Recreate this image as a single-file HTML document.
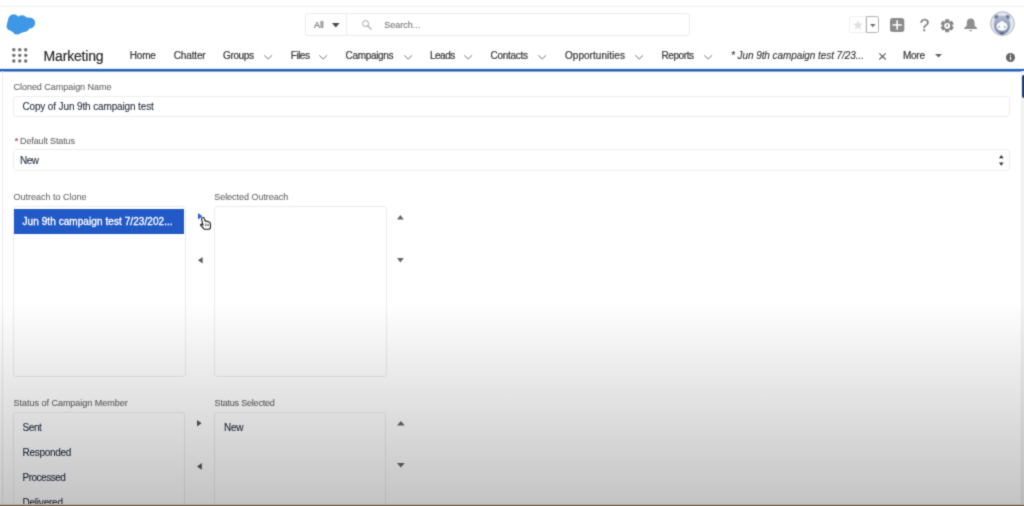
<!DOCTYPE html>
<html><head><meta charset="utf-8"><title>Marketing</title>
<style>
html,body{margin:0;padding:0}
body{width:1024px;height:506px;position:relative;overflow:hidden;background:#fff;font-family:"Liberation Sans",sans-serif}
.t{position:absolute;white-space:nowrap;display:block;-webkit-text-stroke:0.1px currentColor}
.a{position:absolute;display:block}
.box{position:absolute;box-sizing:border-box;border:1px solid #e4e4e6;border-radius:3px}
svg{position:absolute;overflow:visible}
#c{position:absolute;left:20px;top:20px;width:1044px;height:526px}
#w{position:absolute;left:-20px;top:-20px;width:1064px;height:546px;padding:0;overflow:hidden;background:#fff;filter:url(#soft)}
</style></head><body><svg width="0" height="0" style="position:absolute"><defs><filter id="soft" x="0" y="0" width="100%" height="100%" color-interpolation-filters="sRGB"><feConvolveMatrix order="3" kernelMatrix="0.03 0.1 0.03 0.1 0.48 0.1 0.03 0.1 0.03" edgeMode="duplicate" preserveAlpha="true"/></filter></defs></svg><div id="w"><div id="c">
<div class="a" style="left:-20px;top:5.5px;width:1064px;height:1px;background:#eeeef0"></div>
<div class="a" style="left:-20px;top:68px;width:1064px;height:1px;background:#e6eef9"></div>
<div class="a" style="left:-20px;top:69px;width:1064px;height:2px;background:#2560bb"></div>
<div class="a" style="left:-20px;top:71px;width:1064px;height:1px;background:#7ea3dc"></div>
<div class="a" style="left:2px;top:71px;width:1px;height:455px;background:#ebebeb"></div>
<div class="a" style="left:1021px;top:71px;width:1px;height:455px;background:#e9e9ec"></div>
<div class="a" style="left:1022px;top:71px;width:22px;height:455px;background:#f3f4f7"></div>
<div class="a" style="left:1022px;top:75px;width:22px;height:22.5px;background:#1d3d72;border-radius:2px 0 0 2px"></div>

<!-- cloud logo -->
<svg style="left:0;top:0" width="48" height="40" viewBox="0 0 48 40">
<g fill="#3e97e7"><circle cx="13.8" cy="20" r="5.7"/><circle cx="22" cy="20.300" r="5.100"/><circle cx="29.600" cy="23" r="5.500"/><circle cx="11" cy="26.200" r="4.400"/><circle cx="17.100" cy="29.900" r="4.600"/><circle cx="24.500" cy="27" r="4.900"/><circle cx="18" cy="24.500" r="5"/><circle cx="12.200" cy="23.300" r="5"/><circle cx="26" cy="22.300" r="5"/><circle cx="21" cy="28.300" r="4.600"/><circle cx="14" cy="28" r="4.300"/></g>
</svg>

<!-- waffle -->
<svg style="left:12.3px;top:48.4px" width="16" height="15" viewBox="0 0 16 15">
<g fill="#6f6f6f">
<circle cx="1.8" cy="1.7" r="1.7"/><circle cx="7.75" cy="1.7" r="1.7"/><circle cx="13.7" cy="1.7" r="1.7"/>
<circle cx="1.8" cy="7.35" r="1.7"/><circle cx="7.75" cy="7.35" r="1.7"/><circle cx="13.7" cy="7.35" r="1.7"/>
<circle cx="1.8" cy="13" r="1.7"/><circle cx="7.75" cy="13" r="1.7"/><circle cx="13.7" cy="13" r="1.7"/>
</g></svg>

<!-- search -->
<div class="box" style="left:305px;top:13px;width:385px;height:23px;border-color:#ececf0;background:#fff"></div>
<div class="a" style="left:346px;top:14px;width:1px;height:21px;background:#eeeef1"></div>
<svg style="left:331.6px;top:23px" width="8" height="5" viewBox="0 0 8 5"><path d="M0 0H7.6L3.8 4.6Z" fill="#4a4a4a"/></svg>
<svg style="left:361.5px;top:20.2px" width="10" height="10" viewBox="0 0 10 10"><circle cx="3.6" cy="3.6" r="3" fill="none" stroke="#a5a5a5" stroke-width="1"/><path d="M5.8 5.8L9 9" stroke="#a5a5a5" stroke-width="1.2" stroke-linecap="round"/></svg>

<!-- nav chevrons -->
<svg style="left:263.6px;top:54.7px" width="9" height="5" viewBox="0 0 9 5"><path d="M0.3 0.3L4.2 4L8.1 0.3" fill="none" stroke="#777" stroke-width="1"/></svg>
<svg style="left:319px;top:54.7px" width="9" height="5" viewBox="0 0 9 5"><path d="M0.3 0.3L4.2 4L8.1 0.3" fill="none" stroke="#777" stroke-width="1"/></svg>
<svg style="left:403.8px;top:54.7px" width="9" height="5" viewBox="0 0 9 5"><path d="M0.3 0.3L4.2 4L8.1 0.3" fill="none" stroke="#777" stroke-width="1"/></svg>
<svg style="left:464px;top:54.7px" width="9" height="5" viewBox="0 0 9 5"><path d="M0.3 0.3L4.2 4L8.1 0.3" fill="none" stroke="#777" stroke-width="1"/></svg>
<svg style="left:537.5px;top:54.7px" width="9" height="5" viewBox="0 0 9 5"><path d="M0.3 0.3L4.2 4L8.1 0.3" fill="none" stroke="#777" stroke-width="1"/></svg>
<svg style="left:634.8px;top:54.7px" width="9" height="5" viewBox="0 0 9 5"><path d="M0.3 0.3L4.2 4L8.1 0.3" fill="none" stroke="#777" stroke-width="1"/></svg>
<svg style="left:703.5px;top:54.7px" width="9" height="5" viewBox="0 0 9 5"><path d="M0.3 0.3L4.2 4L8.1 0.3" fill="none" stroke="#777" stroke-width="1"/></svg>
<!-- tab close -->
<svg style="left:878.7px;top:53px" width="7" height="7" viewBox="0 0 7 7"><path d="M0.3 0.3L6.7 6.5M6.7 0.3L0.3 6.5" stroke="#5c5c5c" stroke-width="1.1" fill="none"/></svg>
<!-- more caret -->
<svg style="left:935px;top:54px" width="7" height="4" viewBox="0 0 7 4"><path d="M0 0H7L3.5 3.6Z" fill="#666"/></svg>
<!-- info icon -->
<svg style="left:1006px;top:53px" width="9" height="9" viewBox="0 0 9 9"><circle cx="4.5" cy="4.5" r="4.5" fill="#666"/><rect x="3.9" y="3.6" width="1.2" height="3.4" fill="#fff"/><circle cx="4.5" cy="2.3" r="0.7" fill="#fff"/></svg>

<!-- header right icons -->
<div class="box" style="left:848.6px;top:16.3px;width:17.6px;height:17px;border-color:#f1f1f3;border-radius:2px 0 0 2px"></div>
<svg style="left:852.6px;top:20.4px" width="10" height="10" viewBox="0 0 11 11"><path d="M5.5 0.4L7 3.9L10.8 4.2L7.900 6.700L8.800 10.400L5.500 8.400L2.200 10.400L3.100 6.700L0.200 4.200L4 3.900Z" fill="#e0e0e3"/></svg>
<div class="box" style="left:865.6px;top:16.3px;width:13px;height:17px;border-color:#b2b2b2;border-radius:0 2.500px 2.500px 0;background:#fff"></div>
<svg style="left:869.6px;top:23.600px" width="6" height="4" viewBox="0 0 6 4"><path d="M0 0H5.600L2.800 3.300Z" fill="#707070"/></svg>
<svg style="left:890.1px;top:18px" width="15" height="14" viewBox="0 0 15 14"><rect x="0" y="0" width="14.300" height="13.900" rx="2.600" fill="#8c8c8c"/><path d="M7.150 2.200V11.800M2.500 7H11.800" stroke="#fff" stroke-width="1.600"/></svg>
<span class="t" style="left:919.8px;top:17px;transform:translateY(-0.4px);font-size:17px;line-height:17px;color:#868686;-webkit-text-stroke:0.350px #868686">?</span>
<svg style="left:941.300px;top:18.700px" width="12.400" height="13.300" viewBox="-6.200 -6.650 12.400 13.300"><g fill="#878787"><circle r="4.700"/><path id="gt" d="M-1.900 -6.500H1.900L2.300 -3.500H-2.300Z"/><path d="M-1.900 -6.500H1.900L2.300 -3.500H-2.300Z" transform="rotate(60)"/><path d="M-1.900 -6.500H1.900L2.300 -3.500H-2.300Z" transform="rotate(120)"/><path d="M-1.900 -6.500H1.900L2.300 -3.500H-2.300Z" transform="rotate(180)"/><path d="M-1.900 -6.500H1.900L2.300 -3.500H-2.300Z" transform="rotate(240)"/><path d="M-1.900 -6.500H1.900L2.300 -3.500H-2.300Z" transform="rotate(300)"/></g><circle r="3" fill="#fff"/><circle r="1" fill="#878787"/><rect x="-0.350" y="-2.200" width="0.700" height="2" fill="#878787"/></svg>
<svg style="left:963.800px;top:17.500px" width="13.400" height="13.800" viewBox="0 0 14 14"><path d="M7 0.200C4.200 0.200 2.900 2.400 2.900 4.800V7.800L0.300 10.300V11.200H13.700V10.300L11.100 7.800V4.800C11.100 2.400 9.800 0.200 7 0.200Z" fill="#8e8e8e"/><path d="M5.500 12.300H8.500C8.500 13.200 7.800 13.700 7 13.700C6.200 13.700 5.500 13.200 5.500 12.300Z" fill="#8e8e8e"/></svg>
<!-- avatar -->
<svg style="left:990px;top:11px" width="25" height="25" viewBox="0 0 25 25">
<defs><linearGradient id="hood" x1="0" y1="0" x2="0" y2="1"><stop offset="0" stop-color="#b3bbd0"/><stop offset="0.45" stop-color="#97a2bd"/><stop offset="1" stop-color="#7d89a8"/></linearGradient></defs>
<circle cx="12.500" cy="12.600" r="11.900" fill="#e3e6f1" stroke="#b4b5bc" stroke-width="1"/>
<circle cx="6.600" cy="6.300" r="2.700" fill="#a4aec7"/><circle cx="17.600" cy="6.300" r="2.700" fill="#a4aec7"/>
<ellipse cx="12.100" cy="14" rx="8.300" ry="9.400" fill="url(#hood)"/>
<circle cx="6.500" cy="6" r="1.400" fill="#66718e"/><circle cx="17.600" cy="6" r="1.400" fill="#66718e"/>
<ellipse cx="12" cy="15.300" rx="5.500" ry="4.400" fill="#f8fafd"/><circle cx="12" cy="12" r="2" fill="#f8fafd"/>
<circle cx="9" cy="15.900" r="0.850" fill="#949db8"/><circle cx="14.700" cy="15.900" r="0.850" fill="#949db8"/>
<ellipse cx="12" cy="22.400" rx="1.900" ry="1.200" fill="#55607d"/>
</svg>

<!-- form -->
<div class="box" style="left:13px;top:95.5px;width:996.5px;height:21.5px;border-color:#ededf0;background:#fff"></div>
<div class="box" style="left:13px;top:149px;width:996.5px;height:22px;border-color:#ededf0;background:#fff"></div>
<svg style="left:999.2px;top:154.8px" width="5" height="11" viewBox="0 0 5 11"><path d="M2.3 0L4.6 3.3H0Z" fill="#333"/><path d="M0 7.4H4.6L2.3 10.7Z" fill="#333"/></svg>

<!-- listboxes top -->
<div class="box" style="left:13px;top:206.3px;width:172.6px;height:171px;border-color:#ececee;background:#fff"></div>
<div class="a" style="left:13.8px;top:209px;width:170.7px;height:24.7px;background:#2159c7"></div>
<div class="box" style="left:213.5px;top:206.3px;width:173.3px;height:171px;border-color:#ececee;background:#fff"></div>
<!-- top arrows -->
<svg style="left:197.5px;top:213.4px" width="5" height="7" viewBox="0 0 5 7"><path d="M0 0L4.4 3.3L0 6.6Z" fill="#2a5fc4"/></svg>
<svg style="left:197.5px;top:256.8px" width="5" height="7" viewBox="0 0 5 7"><path d="M4.6 0V6.6L0 3.3Z" fill="#5a5a5a"/></svg>
<svg style="left:397.3px;top:214.8px" width="7" height="5" viewBox="0 0 7 5"><path d="M3.4 0L6.8 4.4H0Z" fill="#666"/></svg>
<svg style="left:397.3px;top:257.8px" width="7" height="5" viewBox="0 0 7 5"><path d="M0 0H6.8L3.4 4.4Z" fill="#666"/></svg>
<!-- cursor hand -->
<svg style="left:200.3px;top:216.5px" width="11" height="13" viewBox="0 0 11 13"><path d="M2.6 0.6C3.4 0.2 4.1 0.7 4.3 1.4L5.3 4.2C5.8 3.8 6.6 3.9 7 4.5C7.5 4.2 8.3 4.400 8.600 5C9.200 4.800 10 5.200 10.200 6L10.600 8.400C10.800 10 10.300 11.200 9.400 12.300H4.400C3.400 11.300 2 9.800 0.700 8.400C0.200 7.700 1 6.800 1.800 7.300L3 8.300L1.600 2.200C1.400 1.500 1.900 0.900 2.600 0.600Z" fill="#fff" stroke="#1a1a1a" stroke-width="1.1" stroke-linejoin="round"/><path d="M5.6 6.400V9.200M7.100 6.600V9.200M8.600 6.900V9.200" stroke="#222" stroke-width="0.6"/></svg>

<!-- listboxes bottom -->
<div class="box" style="left:13px;top:411.5px;width:172px;height:110px;border-color:#ececee;background:#fff"></div>
<div class="box" style="left:213.5px;top:411.5px;width:172.3px;height:110px;border-color:#ececee;background:#fff"></div>
<svg style="left:197px;top:419.5px" width="5" height="7" viewBox="0 0 5 7"><path d="M0 0L4.6 3.3L0 6.6Z" fill="#555"/></svg>
<svg style="left:197px;top:462.8px" width="5" height="7" viewBox="0 0 5 7"><path d="M4.8 0V6.8L0 3.4Z" fill="#555"/></svg>
<svg style="left:396.7px;top:420.5px" width="8" height="5" viewBox="0 0 8 5"><path d="M3.85 0L7.7 4.6H0Z" fill="#666"/></svg>
<svg style="left:396.7px;top:463.4px" width="8" height="5" viewBox="0 0 8 5"><path d="M0 0H7.7L3.85 4.5Z" fill="#666"/></svg>

<span class="t" style="left:43.6px;top:49px;font-size:14px;line-height:14px;color:#2b2b2b;letter-spacing:-0.18px;-webkit-text-stroke:0.2px currentColor;">Marketing</span>
<span class="t" style="left:129.8px;top:51px;font-size:10px;line-height:10px;color:#3a3a3a;letter-spacing:-0.20px;-webkit-text-stroke:0.22px currentColor;">Home</span>
<span class="t" style="left:173.7px;top:51px;font-size:10px;line-height:10px;color:#3a3a3a;letter-spacing:-0.13px;-webkit-text-stroke:0.22px currentColor;">Chatter</span>
<span class="t" style="left:223.0px;top:51px;font-size:10px;line-height:10px;color:#3a3a3a;letter-spacing:-0.36px;-webkit-text-stroke:0.22px currentColor;">Groups</span>
<span class="t" style="left:290.8px;top:51px;font-size:10px;line-height:10px;color:#3a3a3a;letter-spacing:-0.50px;-webkit-text-stroke:0.22px currentColor;">Files</span>
<span class="t" style="left:345.5px;top:51px;font-size:10px;line-height:10px;color:#3a3a3a;letter-spacing:-0.32px;-webkit-text-stroke:0.22px currentColor;">Campaigns</span>
<span class="t" style="left:430.0px;top:51px;font-size:10px;line-height:10px;color:#3a3a3a;letter-spacing:-0.50px;-webkit-text-stroke:0.22px currentColor;">Leads</span>
<span class="t" style="left:490.5px;top:51px;font-size:10px;line-height:10px;color:#3a3a3a;letter-spacing:-0.28px;-webkit-text-stroke:0.22px currentColor;">Contacts</span>
<span class="t" style="left:565.0px;top:51px;font-size:10px;line-height:10px;color:#3a3a3a;letter-spacing:0.04px;-webkit-text-stroke:0.22px currentColor;">Opportunities</span>
<span class="t" style="left:661.5px;top:51px;font-size:10px;line-height:10px;color:#3a3a3a;letter-spacing:-0.42px;-webkit-text-stroke:0.22px currentColor;">Reports</span>
<span class="t" style="left:731.0px;top:51px;font-size:10px;line-height:10px;color:#333;letter-spacing:-0.07px;font-style:italic;">* Jun 9th campaign test 7/23...</span>
<span class="t" style="left:903.0px;top:51px;font-size:10px;line-height:10px;color:#3a3a3a;letter-spacing:-0.27px;-webkit-text-stroke:0.22px currentColor;">More</span>
<span class="t" style="left:314.0px;top:21px;font-size:9px;line-height:9px;color:#666;letter-spacing:-0.11px;">All</span>
<span class="t" style="left:384.3px;top:21px;font-size:9px;line-height:9px;color:#777;letter-spacing:-0.00px;">Search...</span>
<span class="t" style="left:13.5px;top:83px;font-size:9px;line-height:9px;color:#6a6a6a;letter-spacing:-0.03px;">Cloned Campaign Name</span>
<span class="t" style="left:22.4px;top:102px;font-size:10px;line-height:10px;color:#2a3044;letter-spacing:-0.13px;">Copy of Jun 9th campaign test</span>
<span class="t" style="left:14.8px;top:137px;font-size:9px;line-height:9px;color:#c23934;letter-spacing:0.00px;">*</span>
<span class="t" style="left:20.0px;top:137px;font-size:9px;line-height:9px;color:#6a6a6a;letter-spacing:-0.12px;">Default Status</span>
<span class="t" style="left:20.0px;top:156px;font-size:10px;line-height:10px;color:#2a3044;letter-spacing:-0.50px;">New</span>
<span class="t" style="left:13.5px;top:193px;font-size:9px;line-height:9px;color:#6a6a6a;letter-spacing:-0.00px;">Outreach to Clone</span>
<span class="t" style="left:22.5px;top:217px;font-size:10px;line-height:10px;color:#fff;letter-spacing:0.07px;-webkit-text-stroke:0.3px currentColor;">Jun 9th campaign test 7/23/202...</span>
<span class="t" style="left:214.2px;top:193px;font-size:9px;line-height:9px;color:#6a6a6a;letter-spacing:-0.03px;">Selected Outreach</span>
<span class="t" style="left:13.6px;top:399px;font-size:9px;line-height:9px;color:#6a6a6a;letter-spacing:-0.02px;">Status of Campaign Member</span>
<span class="t" style="left:214.6px;top:399px;font-size:9px;line-height:9px;color:#6a6a6a;letter-spacing:-0.20px;">Status Selected</span>
<span class="t" style="left:22.5px;top:423px;font-size:10px;line-height:10px;color:#2a3044;letter-spacing:-0.39px;">Sent</span>
<span class="t" style="left:22.5px;top:448px;font-size:10px;line-height:10px;color:#2a3044;letter-spacing:-0.29px;">Responded</span>
<span class="t" style="left:22.5px;top:473px;font-size:10px;line-height:10px;color:#2a3044;letter-spacing:-0.49px;">Processed</span>
<span class="t" style="left:22.5px;top:498px;font-size:10px;line-height:10px;color:#2a3044;letter-spacing:-0.22px;">Delivered</span>
<span class="t" style="left:224.0px;top:423px;font-size:10px;line-height:10px;color:#2a3044;letter-spacing:-0.31px;">New</span>
<div class="a" style="left:-20px;top:0;width:1064px;height:526px;background:linear-gradient(to bottom,rgba(0,0,0,0) 302px,rgba(0,0,0,0.235) 505px)"></div>
<div class="a" style="left:-20px;top:504px;width:1064px;height:1px;background:#b9b1a7"></div>
<div class="a" style="left:-20px;top:505px;width:1064px;height:21px;background:#705c46"></div>
</div></div></body></html>
